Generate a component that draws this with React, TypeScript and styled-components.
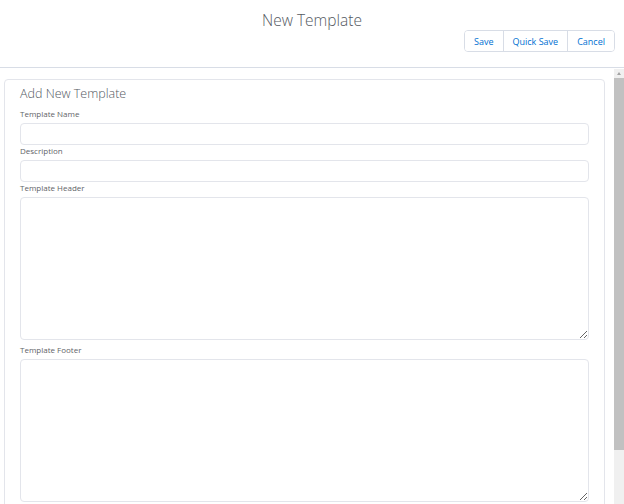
import styled, { createGlobalStyle } from "styled-components";

const GlobalStyle = createGlobalStyle`
  html, body {
    margin: 0;
    padding: 0;
    height: 100%;
    background: #ffffff;
    font-family: "Open Sans", "Noto Sans", sans-serif;
  }
  #root {
    height: 100%;
  }
`;

const Page = styled.div`
  display: flex;
  flex-direction: column;
  height: 100vh;
  overflow: hidden;
`;

const Header = styled.header`
  display: flex;
  flex-direction: column;
  padding: 11px 9px 15px;
  border-bottom: 1px solid #d8dde6;
  margin-bottom: 1px;
`;

const Title = styled.h1`
  margin: 0;
  text-align: center;
  font-size: 15.5px;
  line-height: 19px;
  font-weight: 300;
  color: #54595f;
`;

const ButtonGroup = styled.div`
  display: flex;
  align-self: flex-end;
  border: 1px solid #d8dde6;
  border-radius: 4px;
  overflow: hidden;
`;

const GroupButton = styled.button`
  height: 20px;
  padding: 0 9px;
  border: none;
  border-left: 1px solid #d8dde6;
  background: #ffffff;
  color: #0070d2;
  font-family: "Open Sans", "Noto Sans", sans-serif;
  font-size: 9px;
  cursor: pointer;
  &:first-child {
    border-left: none;
  }
`;

const Body = styled.div`
  flex: 1;
  display: flex;
  min-height: 0;
`;

const Content = styled.main`
  flex: 1;
  overflow: hidden;
  padding: 10px 9px 0 4px;
`;

const Scrollbar = styled.div`
  width: 10px;
  flex-shrink: 0;
  display: flex;
  flex-direction: column;
  background: #f0f0f0;
`;

const ScrollArrow = styled.div`
  height: 9px;
  display: flex;
  align-items: center;
  justify-content: center;
  &::before {
    content: "";
    border-left: 2.5px solid transparent;
    border-right: 2.5px solid transparent;
    border-bottom: 3px solid #a3a3a3;
  }
`;

const ScrollThumb = styled.div`
  height: 372px;
  background: #c1c1c1;
`;

const Card = styled.section`
  border: 1px solid #e3e5eb;
  border-radius: 4px;
  padding: 4px 15px 16px;
`;

const CardTitle = styled.h2`
  margin: 0 0 4px;
  font-size: 12.5px;
  line-height: 20px;
  font-weight: 300;
  color: #54595f;
`;

const Label = styled.label`
  display: block;
  font-size: 8px;
  line-height: 12px;
  color: #5f6468;
  margin-bottom: 3px;
`;

const TextInput = styled.input`
  display: block;
  box-sizing: border-box;
  width: 100%;
  height: 22px;
  margin: 0;
  border: 1px solid #e3e5eb;
  border-radius: 4px;
  font-family: inherit;
  font-size: 9px;
  padding: 0 6px;
  outline: none;
`;

const TextArea = styled.textarea`
  display: block;
  box-sizing: border-box;
  width: 100%;
  height: 143px;
  margin: 0 0 4px;
  border: 1px solid #e3e5eb;
  border-radius: 4px;
  font-family: inherit;
  font-size: 9px;
  padding: 4px 6px;
  outline: none;
  resize: vertical;
`;

export default function App() {
  return (
    <>
      <GlobalStyle />
      <Page>
        <Header>
          <Title>New Template</Title>
          <ButtonGroup>
            <GroupButton>Save</GroupButton>
            <GroupButton>Quick Save</GroupButton>
            <GroupButton>Cancel</GroupButton>
          </ButtonGroup>
        </Header>
        <Body>
          <Content>
            <Card>
              <CardTitle>Add New Template</CardTitle>
              <Label htmlFor="tpl-name">Template Name</Label>
              <TextInput id="tpl-name" type="text" />
              <Label htmlFor="tpl-desc">Description</Label>
              <TextInput id="tpl-desc" type="text" />
              <Label htmlFor="tpl-header">Template Header</Label>
              <TextArea id="tpl-header" />
              <Label htmlFor="tpl-footer">Template Footer</Label>
              <TextArea id="tpl-footer" />
            </Card>
          </Content>
          <Scrollbar>
            <ScrollArrow />
            <ScrollThumb />
          </Scrollbar>
        </Body>
      </Page>
    </>
  );
}
